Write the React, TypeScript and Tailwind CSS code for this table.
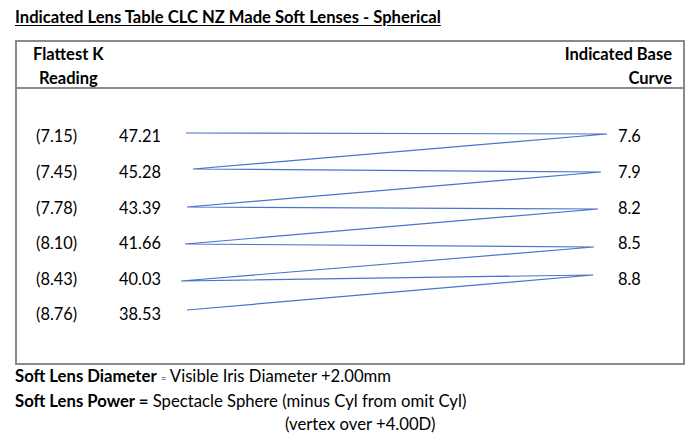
import React from "react";

const rows = [
  { r: "(7.15)", k: "47.21", bc: "7.6" },
  { r: "(7.45)", k: "45.28", bc: "7.9" },
  { r: "(7.78)", k: "43.39", bc: "8.2" },
  { r: "(8.10)", k: "41.66", bc: "8.5" },
  { r: "(8.43)", k: "40.03", bc: "8.8" },
  { r: "(8.76)", k: "38.53", bc: "" },
];

// zigzag joining K readings to base curves (page coordinates)
const pts = [
  [186, 133], [607, 134], [193, 169], [601, 172], [187, 207], [598, 209],
  [185, 244], [594, 247], [181, 281], [593, 275], [187, 310],
];

export default function App() {
  return (
    <div
      className="w-[700px] h-[444px] bg-white text-black overflow-hidden"
      style={{ fontFamily: "Lato, 'Open Sans', sans-serif" }}
    >
      <div className="pl-[15px] pt-[6px] h-[40px]">
        <h1 className="text-[16.6px] font-bold underline underline-offset-[2px] leading-[22px]">
          Indicated Lens Table CLC NZ Made Soft Lenses - Spherical
        </h1>
      </div>

      <div className="ml-[15px] w-[670px] h-[325px] border-2 border-[#8a8a8a] flex flex-col">
        {/* header */}
        <div className="h-[47px] border-b-2 border-[#8a8a8a] flex justify-between pl-[16px] pr-[11px] text-[16.5px] font-bold leading-[24px]">
          <div className="text-center">
            <div>Flattest K</div>
            <div>Reading</div>
          </div>
          <div className="text-right">
            <div>Indicated Base</div>
            <div>Curve</div>
          </div>
        </div>

        {/* body */}
        <div className="relative flex-1 pt-[30px] text-[16.4px]">
          {rows.map((row) => (
            <div key={row.r} className="h-[35.6px] flex items-center">
              <span className="w-[102px] pl-[19px]">{row.r}</span>
              <span className="w-[499px]">{row.k}</span>
              <span>{row.bc}</span>
            </div>
          ))}
          <svg
            className="absolute left-0 top-0"
            width={666}
            height={274}
            viewBox="17 89 666 274"
          >
            <polyline
              points={pts.map((p) => p.join(",")).join(" ")}
              fill="none"
              stroke="#4a74c9"
              strokeWidth={1.2}
            />
          </svg>
        </div>
      </div>

      <div className="pl-[15px] text-[16.7px] leading-[23px]">
        <div>
          <b>Soft Lens Diameter</b>{" "}
          <span className="text-[9px]">=</span> Visible Iris Diameter +2.00mm
        </div>
        <div>
          <b>Soft Lens Power =</b> Spectacle Sphere (minus Cyl from omit Cyl)
        </div>
        <div className="pl-[270px]">(vertex over +4.00D)</div>
      </div>
    </div>
  );
}
